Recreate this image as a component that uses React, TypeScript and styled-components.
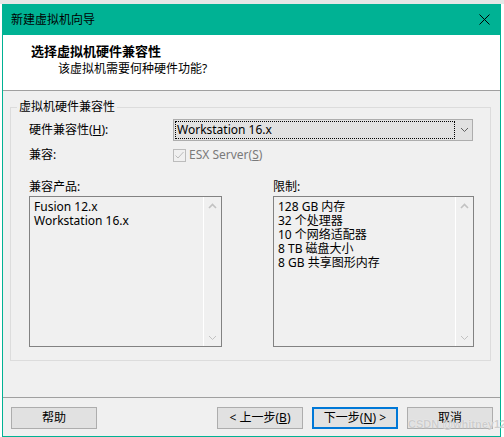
import React from 'react'
import styled, { createGlobalStyle } from 'styled-components'

const GlobalStyle = createGlobalStyle`
  html, body {
    margin: 0;
    padding: 0;
  }
  body {
    width: 504px;
    height: 437px;
    overflow: hidden;
    background: linear-gradient(#e6e6e6 0 4px, #ffffff 4px);
    font-family: "Noto Sans", "Noto Sans CJK SC", sans-serif;
    font-size: 12px;
    color: #000;
  }
`

const TEAL = '#00b294'

const Window = styled.div`
  position: relative;
  box-sizing: border-box;
  width: 499px;
  height: 433px;
  margin: 4px 0 0 2px;
  border: 1px solid ${TEAL};
  border-top: none;
  display: flex;
  flex-direction: column;
`

const TitleBar = styled.div`
  height: 31px;
  flex: none;
  background: ${TEAL};
  display: flex;
  align-items: center;
  padding-left: 8px;
  font-size: 12px;
  color: #000;
`

const TitleText = styled.span`
  flex: 1;
  line-height: 16px;
`

const CloseButton = styled.div`
  width: 31px;
  height: 31px;
  display: flex;
  align-items: center;
  justify-content: center;
`

const Header = styled.div`
  box-sizing: border-box;
  height: 56px;
  flex: none;
  background: #fff;
  border-bottom: 1px solid #a0a0a0;
  padding: 7px 0 0 28px;
`

const HeaderTitle = styled.div`
  font-size: 13px;
  font-weight: bold;
  line-height: 18px;
`

const HeaderSub = styled.div`
  margin: 1px 0 0 27px;
  line-height: 16px;
`

const Body = styled.div`
  flex: 1;
  background: #f0f0f0;
  display: flex;
  flex-direction: column;
`

const Group = styled.fieldset`
  margin: 8px 9px 0 7px;
  padding: 0;
  border: 1px solid #dcdcdc;
  min-inline-size: auto;
`

const Legend = styled.legend`
  margin-left: 6px;
  padding: 0 2px;
  line-height: 16px;
`

const GroupInner = styled.div`
  padding: 4px 0 13px 18px;
`

const Row = styled.div<{ $h: number; $gap?: number }>`
  display: flex;
  align-items: center;
  height: ${p => p.$h}px;
  margin-bottom: ${p => p.$gap ?? 0}px;
`

const Label = styled.div`
  width: 144px;
  flex: none;
  line-height: 16px;
`

const Combo = styled.div`
  box-sizing: border-box;
  width: 300px;
  height: 22px;
  background: #e1e1e1;
  border: 1px solid #adadad;
  display: flex;
  align-items: stretch;
`

const ComboFocus = styled.div`
  width: 280px;
  margin: 1px;
  border: 1px dotted #000;
  box-sizing: border-box;
  padding-left: 1px;
  display: flex;
  align-items: center;
  line-height: 16px;
`

const ComboArrow = styled.div`
  flex: 1;
  display: flex;
  align-items: center;
  justify-content: center;
`

const CheckBox = styled.div`
  box-sizing: border-box;
  width: 13px;
  height: 13px;
  border: 1px solid #bcbcbc;
  background: #f0f0f0;
  display: flex;
  align-items: center;
  justify-content: center;
`

const CheckLabel = styled.span`
  margin-left: 3px;
  color: #7a7a7a;
  line-height: 16px;
`

const Lists = styled.div`
  display: flex;
  gap: 51px;
  margin-top: 14px;
`

const ListColumn = styled.div<{ $w: number }>`
  width: ${p => p.$w}px;
  display: flex;
  flex-direction: column;
`

const ListCaption = styled.div`
  line-height: 16px;
  margin-bottom: 1px;
`

const ListBox = styled.div`
  box-sizing: border-box;
  height: 151px;
  border: 1px solid #828282;
  background: #f0f0f0;
  display: flex;
`

const ListItems = styled.div`
  flex: 1;
  padding: 3px 0 0 4px;
`

const ListItem = styled.div`
  line-height: 14px;
  white-space: nowrap;
`

const ScrollBar = styled.div`
  width: 17px;
  flex: none;
  border-left: 1px solid #fff;
  display: flex;
  flex-direction: column;
  justify-content: space-between;
`

const ScrollArrow = styled.div`
  height: 17px;
  display: flex;
  align-items: center;
  justify-content: center;
`

const Footer = styled.div`
  margin-top: auto;
  border-top: 1px solid #a0a0a0;
  height: 39px;
  box-sizing: border-box;
  padding: 9px 7px 0 8px;
  display: flex;
  gap: 9px;
`

const Button = styled.div<{ $primary?: boolean; $push?: boolean }>`
  box-sizing: border-box;
  width: 86px;
  height: 22px;
  background: #e1e1e1;
  border: ${p => (p.$primary ? '2px solid #0078d7' : '1px solid #adadad')};
  display: flex;
  align-items: center;
  justify-content: center;
  line-height: 16px;
  margin-left: ${p => (p.$push ? 'auto' : '0')};
  white-space: nowrap;
`

const Watermark = styled.div`
  position: absolute;
  left: 405px;
  bottom: 6px;
  font-family: "Liberation Sans", sans-serif;
  font-size: 11px;
  font-weight: bold;
  white-space: nowrap;
  color: rgba(190, 190, 190, 0.75);
  text-shadow: 0 0 1px #fff;
  pointer-events: none;
`

const Chevron = ({ up, color }: { up?: boolean; color: string }) => (
  <svg width="9" height="6" viewBox="0 0 9 6">
    <polyline
      points={up ? '1,5 4.5,1.5 8,5' : '1,1 4.5,4.5 8,1'}
      fill="none"
      stroke={color}
      strokeWidth={up ? 1.6 : 1}
    />
  </svg>
)

const ScrollList = ({ items }: { items: string[] }) => (
  <ListBox>
    <ListItems>
      {items.map(item => (
        <ListItem key={item}>{item}</ListItem>
      ))}
    </ListItems>
    <ScrollBar>
      <ScrollArrow>
        <Chevron up color="#c2c2c2" />
      </ScrollArrow>
      <ScrollArrow>
        <Chevron color="#c2c2c2" />
      </ScrollArrow>
    </ScrollBar>
  </ListBox>
)

const products = ['Fusion 12.x', 'Workstation 16.x']
const limits = ['128 GB 内存', '32 个处理器', '10 个网络适配器', '8 TB 磁盘大小', '8 GB 共享图形内存']

const App: React.FC = () => {
  return (
    <>
      <GlobalStyle />
      <Window>
        <TitleBar>
          <TitleText>新建虚拟机向导</TitleText>
          <CloseButton>
            <svg width="11" height="11" viewBox="0 0 11 11">
              <path d="M0.5 0.5 L10.5 10.5 M10.5 0.5 L0.5 10.5" stroke="#000" strokeWidth="1" />
            </svg>
          </CloseButton>
        </TitleBar>
        <Header>
          <HeaderTitle>选择虚拟机硬件兼容性</HeaderTitle>
          <HeaderSub>该虚拟机需要何种硬件功能?</HeaderSub>
        </Header>
        <Body>
          <Group>
            <Legend>虚拟机硬件兼容性</Legend>
            <GroupInner>
              <Row $h={22} $gap={4}>
                <Label>
                  硬件兼容性(<u>H</u>):
                </Label>
                <Combo>
                  <ComboFocus>Workstation 16.x</ComboFocus>
                  <ComboArrow>
                    <Chevron color="#606060" />
                  </ComboArrow>
                </Combo>
              </Row>
              <Row $h={20}>
                <Label>兼容:</Label>
                <CheckBox>
                  <svg width="11" height="11" viewBox="0 0 11 11">
                    <polyline points="1.5,5.5 4,8 9.5,2" fill="none" stroke="#bcbcbc" strokeWidth="1" />
                  </svg>
                </CheckBox>
                <CheckLabel>
                  ESX Server(<u>S</u>)
                </CheckLabel>
              </Row>
              <Lists>
                <ListColumn $w={193}>
                  <ListCaption>兼容产品:</ListCaption>
                  <ScrollList items={products} />
                </ListColumn>
                <ListColumn $w={201}>
                  <ListCaption>限制:</ListCaption>
                  <ScrollList items={limits} />
                </ListColumn>
              </Lists>
            </GroupInner>
          </Group>
          <Footer>
            <Button>帮助</Button>
            <Button $push>
              &lt; 上一步(<u>B</u>)
            </Button>
            <Button $primary>
              下一步(<u>N</u>) &gt;
            </Button>
            <Button>取消</Button>
          </Footer>
        </Body>
        <Watermark>CSDN @whitney1229</Watermark>
      </Window>
    </>
  )
}

export default App
